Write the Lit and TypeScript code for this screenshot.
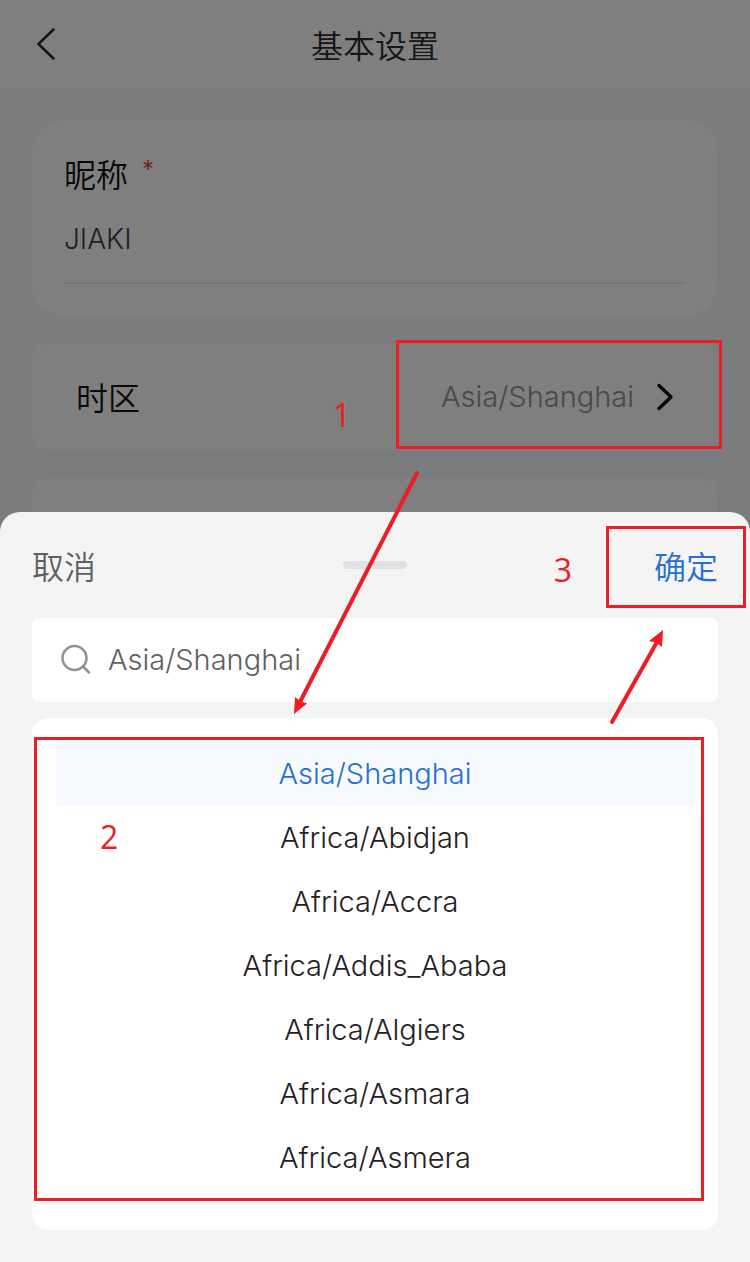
import { LitElement, html, css, svg } from "lit";
import { customElement, state } from "lit/decorators.js";
import { classMap } from "lit/directives/class-map.js";

const ZONES = [
  "Asia/Shanghai",
  "Africa/Abidjan",
  "Africa/Accra",
  "Africa/Addis_Ababa",
  "Africa/Algiers",
  "Africa/Asmara",
  "Africa/Asmera",
];

/** Red frames, arrows and step numbers laid over the screens. */
@customElement("step-guide")
class StepGuide extends LitElement {
  static styles = css`
    :host {
      position: absolute;
      inset: 0;
      pointer-events: none;
      color: #ee1c25;
      font: 400 32px/40px "Open Sans", sans-serif;
    }
    .frame {
      position: absolute;
      box-sizing: border-box;
      border: 3px solid currentColor;
    }
    .frame-zone { top: 340px; right: 28px; width: 326px; height: 109px; }
    .frame-list { top: 737px; left: 34px; right: 46px; height: 464px; }
    .frame-ok { top: 526px; right: 4px; width: 140px; height: 82px; }
    .num { position: absolute; }
    .num-one { top: 395px; right: 399px; }
    .num-two { top: 817px; left: 100px; }
    .num-three { top: 550px; right: 178px; }
    .arrows {
      position: absolute;
      top: 460px;
      right: 80px;
      width: 390px;
      height: 280px;
    }
  `;

  render() {
    return html`
      <div class="frame frame-zone"></div>
      <div class="frame frame-ok"></div>
      <div class="frame frame-list"></div>
      <span class="num num-one">1</span>
      <span class="num num-two">2</span>
      <span class="num num-three">3</span>
      <svg class="arrows" viewBox="280 460 390 280" aria-hidden="true">
        ${svg`
          <g stroke="currentColor" stroke-width="4" stroke-linecap="round" fill="none">
            <path d="M417 473L300 702" />
            <path d="M612 722L657 642" />
          </g>
          <g fill="currentColor">
            <path d="M294 714L295 697L300 701L307 703.500Z" />
            <path d="M663 630L649 641L656 642.500L662 647Z" />
          </g>
        `}
      </svg>
    `;
  }
}

/** Bottom sheet with a search box and the list of time zones. */
@customElement("zone-sheet")
class ZoneSheet extends LitElement {
  @state() private selected = ZONES[0];

  static styles = css`
    :host {
      display: block;
      box-sizing: border-box;
      background: #f4f4f4;
      border-radius: 20px 20px 0 0;
      padding: 0 32px 32px;
    }
    button, input {
      font: inherit;
      border: 0;
      padding: 0;
      margin: 0;
      background: none;
      color: inherit;
      outline: none;
    }
    .bar {
      display: grid;
      grid-template-columns: 1fr auto 1fr;
      align-items: center;
      height: 106px;
    }
    .act { font-size: 32px; line-height: 48px; font-weight: 350; padding-top: 6px; }
    .cancel { justify-self: start; color: #5f6062; }
    .ok { justify-self: end; color: #276fcf; }
    .grip {
      width: 64px;
      height: 8px;
      border-radius: 4px;
      background: #e0e1e5;
    }
    .search {
      display: flex;
      align-items: center;
      gap: 16px;
      height: 84px;
      padding: 0 28px;
      border-radius: 8px;
      background: #fff;
    }
    .search svg { flex: none; width: 32px; height: 32px; }
    .search input {
      flex: 1;
      min-width: 0;
      font-size: 29px;
      line-height: 40px;
      color: #5f6062;
    }
    .list {
      list-style: none;
      margin: 16px 0 0;
      padding: 24px 24px 40px;
      border-radius: 16px;
      background: #fff;
    }
    .zone {
      display: block;
      width: 100%;
      font-size: 29px;
      line-height: 64px;
      color: #1f2123;
    }
    .zone.on { background: #f7fbff; color: #276fcf; }
  `;

  render() {
    return html`
      <div class="bar">
        <button class="act cancel">取消</button>
        <span class="grip"></span>
        <button class="act ok">确定</button>
      </div>
      <label class="search">
        <svg viewBox="0 0 32 32" fill="none" stroke="#8f9299" stroke-width="2.500" stroke-linecap="round" aria-hidden="true">
          <circle cx="14.500" cy="14" r="12" />
          <path d="M23 22.500L29 28.500" />
        </svg>
        <input type="text" aria-label="时区" .value=${this.selected} />
      </label>
      <ul class="list">
        ${ZONES.map(
          (z) => html`<li>
            <button
              class=${classMap({ zone: true, on: z === this.selected })}
              @click=${() => (this.selected = z)}
            >${z}</button>
          </li>`
        )}
      </ul>
    `;
  }
}

@customElement("app-root")
class AppRoot extends LitElement {
  static styles = css`
    :host {
      display: block;
      position: relative;
      height: 100vh;
      overflow: hidden;
      background: #f7f8fb;
      font: 300 28px/40px Inter, "Noto Sans CJK SC", sans-serif;
      color: #1f2123;
    }
    button, input {
      font: inherit;
      border: 0;
      padding: 0;
      margin: 0;
      background: none;
      color: inherit;
      outline: none;
    }
    .top {
      display: grid;
      grid-template-columns: 1fr auto 1fr;
      align-items: center;
      height: 88px;
      padding: 0 32px;
      background: #fff;
    }
    .top h1 {
      margin: 0;
      padding-top: 6px;
      font-size: 32px;
      line-height: 48px;
      font-weight: 350;
      color: #2c2d2e;
    }
    .back { justify-self: start; display: flex; }
    .back svg { width: 32px; height: 32px; }
    .form {
      display: flex;
      flex-direction: column;
      gap: 28px;
      padding: 32px;
    }
    .card { background: #fff; border-radius: 16px; }
    .name {
      display: flex;
      flex-direction: column;
      padding: 32px;
      border-radius: 32px;
    }
    .name label, .zone-label {
      font-size: 32px;
      line-height: 48px;
      font-weight: 350;
      color: #111;
    }
    .name label { display: flex; gap: 14px; }
    .star { font-size: 24px; line-height: 36px; color: #f0483e; font-weight: 400; }
    .name input {
      height: 78px;
      padding: 0 0 4px;
      border-bottom: 2px solid #ebebed;
      color: #3c3e42;
    }
    .row {
      display: flex;
      align-items: center;
      height: 106px;
      padding: 0 42px 0 44px;
    }
    .zone-label { flex: 1; text-align: left; padding-top: 4px; }
    .zone-value { font-size: 29px; color: #8f9299; }
    .row svg { width: 20px; height: 28px; margin-left: 22px; }
    .mask {
      position: absolute;
      inset: 0;
      display: flex;
      flex-direction: column;
      justify-content: flex-end;
      background: rgba(0, 0, 0, 0.5);
    }
  `;

  render() {
    return html`
      <header class="top">
        <button class="back" aria-label="返回">
          <svg viewBox="0 0 32 32" fill="none" stroke="#2c2d2e" stroke-width="2.500" stroke-linecap="round" stroke-linejoin="round" aria-hidden="true">
            <path d="M21.500 1.500L6.500 16L21.500 30.500" />
          </svg>
        </button>
        <h1>基本设置</h1>
      </header>
      <main class="form">
        <section class="card name">
          <label for="nick">昵称<span class="star">*</span></label>
          <input id="nick" type="text" value="JIAKI" />
        </section>
        <button class="card row">
          <span class="zone-label">时区</span>
          <span class="zone-value">Asia/Shanghai</span>
          <svg viewBox="0 0 20 28" fill="none" stroke="#111" stroke-width="3.500" stroke-linecap="round" stroke-linejoin="round" aria-hidden="true">
            <path d="M3 2.500L15 14L3 25.500" />
          </svg>
        </button>
        <section class="card row"></section>
      </main>
      <div class="mask">
        <zone-sheet role="dialog" aria-label="时区"></zone-sheet>
      </div>
      <step-guide></step-guide>
    `;
  }
}
